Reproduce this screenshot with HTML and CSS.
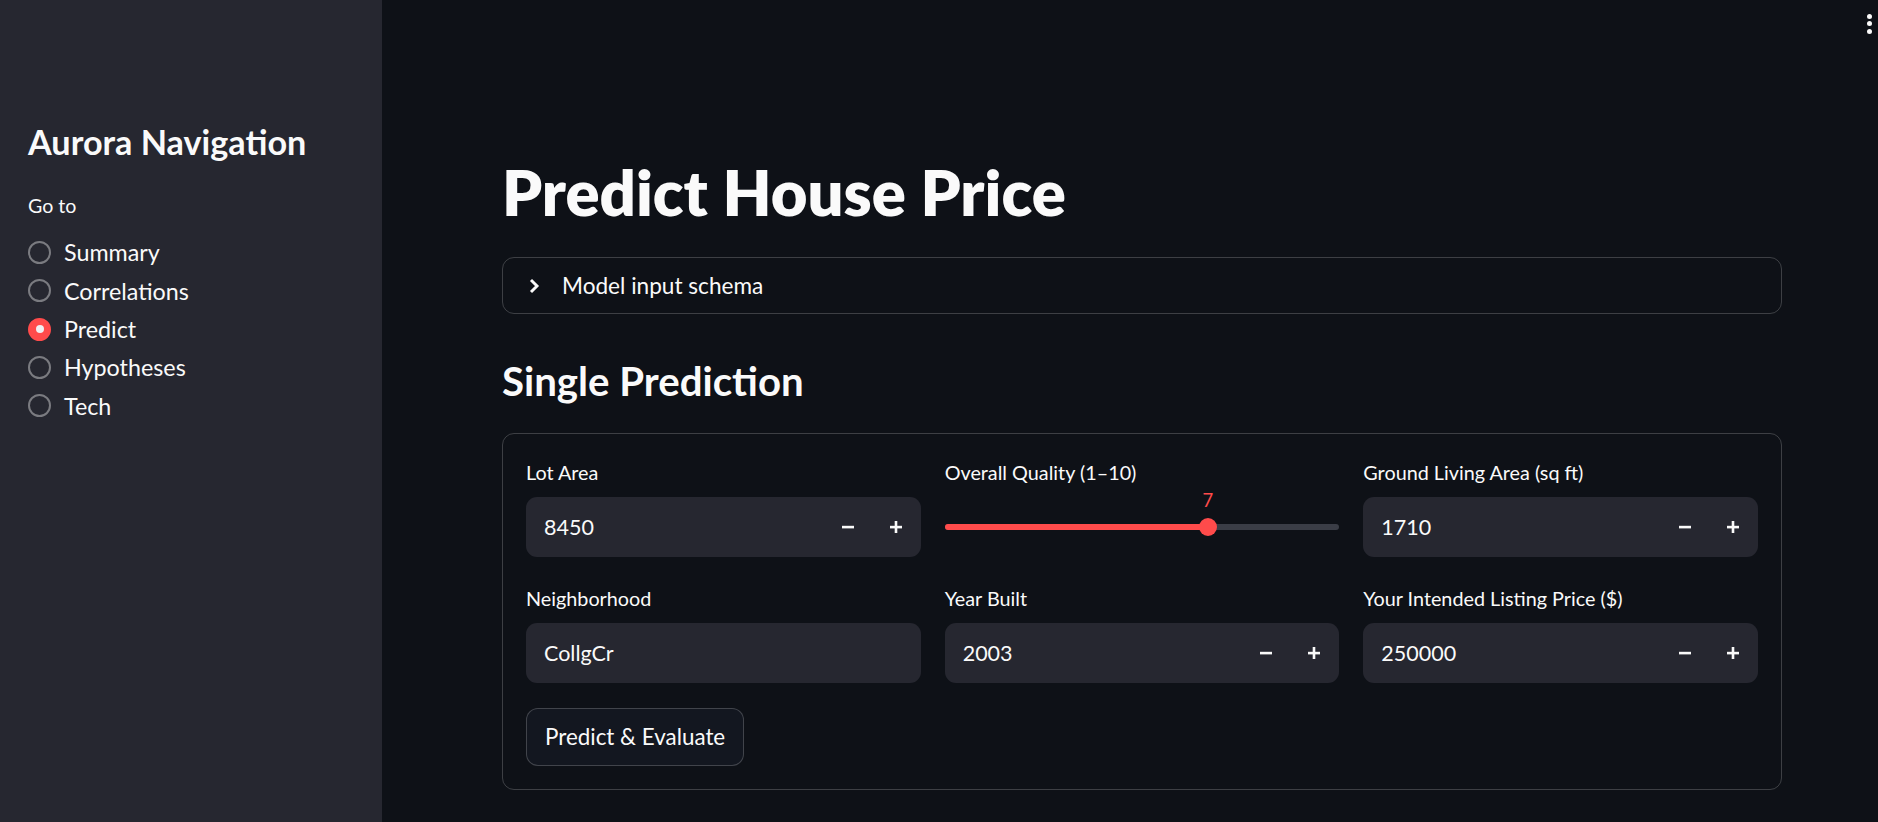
FILE: index.html
```html
<!DOCTYPE html>
<html lang="en">
<head>
<meta charset="utf-8">
<title>Predict House Price</title>
<link rel="stylesheet" href="styles.css">
</head>
<body>
<div class="app">
  <aside class="sidebar">
    <h2 class="side-title">Aurora Navigation</h2>
    <div class="radio-caption">Go to</div>
    <div class="radio-group">
      <div class="radio"><span class="radio-circle"></span><span class="radio-text">Summary</span></div>
      <div class="radio"><span class="radio-circle"></span><span class="radio-text">Correlations</span></div>
      <div class="radio radio-checked"><span class="radio-circle"></span><span class="radio-text">Predict</span></div>
      <div class="radio"><span class="radio-circle"></span><span class="radio-text">Hypotheses</span></div>
      <div class="radio"><span class="radio-circle"></span><span class="radio-text">Tech</span></div>
    </div>
  </aside>

  <main class="main">
    <div class="menu-dots"><span></span><span></span><span></span></div>
    <div class="content">
      <h1 class="title">Predict House Price</h1>

      <div class="expander">
        <svg class="chevron" viewBox="0 0 26 26" width="26" height="26"><path d="M10 7l6 6-6 6" fill="none" stroke="#fafafa" stroke-width="2.9"/></svg>
        <span class="expander-text">Model input schema</span>
      </div>

      <h2 class="subtitle">Single Prediction</h2>

      <div class="form">
        <div class="grid">
          <div class="field">
            <div class="field-label">Lot Area</div>
            <div class="input number">
              <span class="value">8450</span>
              <span class="step"><svg viewBox="0 0 14 14" width="14" height="14"><rect x="1" y="5.8" width="12" height="2.6" fill="#fafafa"/></svg></span>
              <span class="step"><svg viewBox="0 0 14 14" width="14" height="14"><rect x="1" y="5.8" width="12" height="2.6" fill="#fafafa"/><rect x="5.7" y="1" width="2.6" height="12" fill="#fafafa"/></svg></span>
            </div>
          </div>

          <div class="field">
            <div class="field-label">Overall Quality (1–10)</div>
            <div class="slider" style="--pct:66.67%">
              <div class="track"><div class="track-fill"></div></div>
              <div class="thumb"></div>
              <div class="thumb-value">7</div>
            </div>
          </div>

          <div class="field">
            <div class="field-label">Ground Living Area (sq ft)</div>
            <div class="input number">
              <span class="value">1710</span>
              <span class="step"><svg viewBox="0 0 14 14" width="14" height="14"><rect x="1" y="5.8" width="12" height="2.6" fill="#fafafa"/></svg></span>
              <span class="step"><svg viewBox="0 0 14 14" width="14" height="14"><rect x="1" y="5.8" width="12" height="2.6" fill="#fafafa"/><rect x="5.7" y="1" width="2.6" height="12" fill="#fafafa"/></svg></span>
            </div>
          </div>

          <div class="field">
            <div class="field-label">Neighborhood</div>
            <div class="input">
              <span class="value">CollgCr</span>
            </div>
          </div>

          <div class="field">
            <div class="field-label">Year Built</div>
            <div class="input number">
              <span class="value">2003</span>
              <span class="step"><svg viewBox="0 0 14 14" width="14" height="14"><rect x="1" y="5.8" width="12" height="2.6" fill="#fafafa"/></svg></span>
              <span class="step"><svg viewBox="0 0 14 14" width="14" height="14"><rect x="1" y="5.8" width="12" height="2.6" fill="#fafafa"/><rect x="5.7" y="1" width="2.6" height="12" fill="#fafafa"/></svg></span>
            </div>
          </div>

          <div class="field">
            <div class="field-label">Your Intended Listing Price ($)</div>
            <div class="input number">
              <span class="value">250000</span>
              <span class="step"><svg viewBox="0 0 14 14" width="14" height="14"><rect x="1" y="5.8" width="12" height="2.6" fill="#fafafa"/></svg></span>
              <span class="step"><svg viewBox="0 0 14 14" width="14" height="14"><rect x="1" y="5.8" width="12" height="2.6" fill="#fafafa"/><rect x="5.7" y="1" width="2.6" height="12" fill="#fafafa"/></svg></span>
            </div>
          </div>
        </div>

        <button class="btn" type="button">Predict &amp; Evaluate</button>
      </div>
    </div>
  </main>
</div>
</body>
</html>
```
FILE: styles.css
```css
* { box-sizing: border-box; }

html, body {
  margin: 0;
  padding: 0;
  height: 100%;
  background: #0e1117;
  color: #fafafa;
  font-family: Lato, "Noto Sans", sans-serif;
  overflow: hidden;
}

.app {
  display: flex;
  height: 822px;
}

/* ---------- Sidebar ---------- */
.sidebar {
  width: 382px;
  flex: 0 0 382px;
  background: #262730;
  padding: 121px 28px 0 28px;
}

.side-title {
  margin: 0;
  font-size: 34.2px;
  font-weight: 700;
  line-height: 41.4px;
}

.radio-caption {
  margin-top: 32px;
  font-size: 19.6px;
  line-height: 24px;
}

.radio-group {
  margin-top: 15px;
  display: flex;
  flex-direction: column;
}

.radio {
  height: 38.3px;
  display: flex;
  align-items: center;
  gap: 13px;
}

.radio-circle {
  width: 23px;
  height: 23px;
  border-radius: 50%;
  border: 2px solid rgba(250, 250, 250, 0.4);
  flex: 0 0 23px;
  display: flex;
  align-items: center;
  justify-content: center;
}

.radio-checked .radio-circle {
  background: #ff4b4b;
  border-color: #ff4b4b;
}

.radio-checked .radio-circle::after {
  content: "";
  width: 8px;
  height: 8px;
  border-radius: 50%;
  background: #f0f0f2;
}

.radio-text {
  font-size: 23.3px;
  line-height: 38.3px;
}

/* ---------- Main ---------- */
.main {
  flex: 1;
  position: relative;
  padding: 154px 0 0 120px;
}

.menu-dots {
  position: absolute;
  top: 13.5px;
  right: 6.5px;
  display: flex;
  flex-direction: column;
  gap: 2.5px;
}

.menu-dots span {
  width: 5px;
  height: 5px;
  border-radius: 50%;
  background: #fafafa;
}

.content {
  width: 1280px;
}

.title {
  margin: 0;
  font-size: 63.3px;
  font-weight: 800;
  line-height: 76.8px;
}

.expander {
  margin-top: 26px;
  height: 57.5px;
  border: 1px solid rgba(250, 250, 250, 0.2);
  border-radius: 12px;
  display: flex;
  align-items: center;
  padding-left: 18px;
}

.chevron {
  flex: 0 0 26px;
}

.expander-text {
  margin-left: 15px;
  font-size: 22.6px;
  line-height: 1.2;
}

.subtitle {
  margin: 42.5px 0 0 0;
  font-size: 40.2px;
  font-weight: 700;
  line-height: 48.6px;
}

.form {
  margin-top: 27.5px;
  border: 1px solid rgba(250, 250, 250, 0.2);
  border-radius: 12px;
  padding: 21px 23px 23px 23px;
  display: flex;
  flex-direction: column;
  gap: 24.5px;
}

.grid {
  display: grid;
  grid-template-columns: repeat(3, 1fr);
  column-gap: 24px;
  row-gap: 24.5px;
}

.field-label {
  font-size: 19.8px;
  line-height: 34px;
  margin-bottom: 8px;
}

.input {
  height: 60px;
  background: #262730;
  border-radius: 11px;
  display: flex;
  align-items: center;
  padding-left: 18px;
}

.value {
  flex: 1;
  font-size: 21.5px;
}

.step {
  width: 48px;
  height: 60px;
  display: flex;
  align-items: center;
  justify-content: center;
}

.input.number {
  padding-right: 1px;
}

/* ---------- Slider ---------- */
.slider {
  position: relative;
  height: 60px;
  display: flex;
  align-items: center;
}

.track {
  width: 100%;
  height: 6px;
  border-radius: 3px;
  background: #3a3d46;
  overflow: hidden;
}

.track-fill {
  width: var(--pct);
  height: 100%;
  background: #ff4b4b;
}

.thumb {
  position: absolute;
  top: 21px;
  left: calc(var(--pct) - 9px);
  width: 18px;
  height: 18px;
  border-radius: 50%;
  background: #ff4b4b;
}

.thumb-value {
  position: absolute;
  top: -6px;
  left: var(--pct);
  transform: translateX(-50%);
  font-size: 18.5px;
  line-height: 18px;
  color: #ff4b4b;
}

/* ---------- Button ---------- */
.btn {
  align-self: flex-start;
  height: 58.5px;
  padding: 0 18px;
  background: #131720;
  color: #fafafa;
  border: 1px solid rgba(250, 250, 250, 0.2);
  border-radius: 12px;
  font-family: Lato, "Noto Sans", sans-serif;
  font-size: 22.4px;
  line-height: 1.2;
}
```
